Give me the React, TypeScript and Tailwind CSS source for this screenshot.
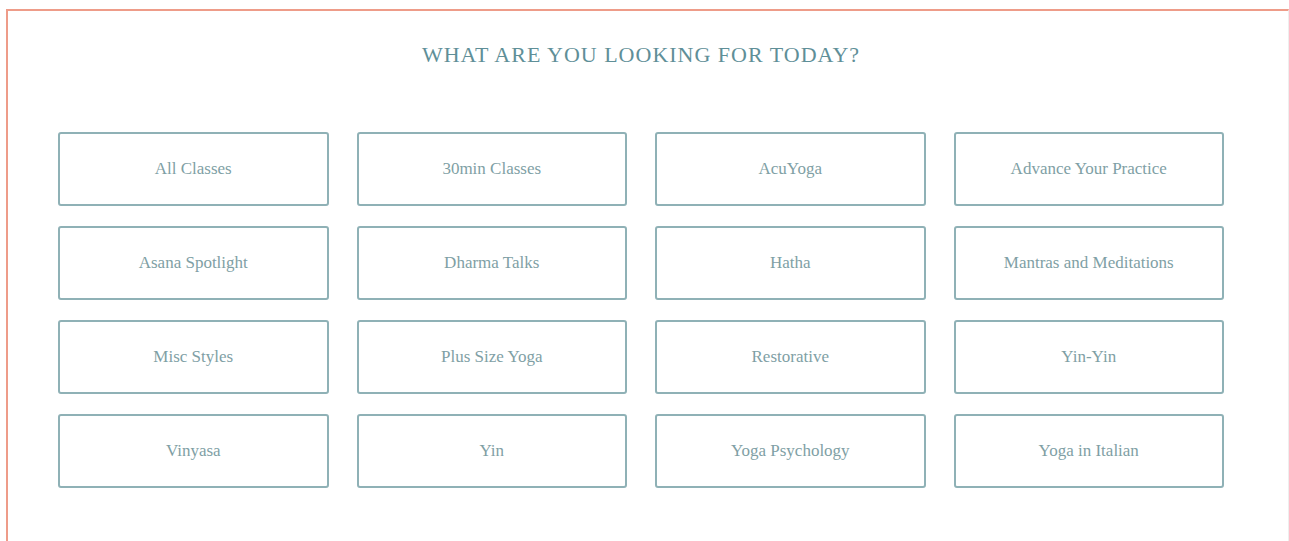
const categories = [
  "All Classes",
  "30min Classes",
  "AcuYoga",
  "Advance Your Practice",
  "Asana Spotlight",
  "Dharma Talks",
  "Hatha",
  "Mantras and Meditations",
  "Misc Styles",
  "Plus Size Yoga",
  "Restorative",
  "Yin-Yin",
  "Vinyasa",
  "Yin",
  "Yoga Psychology",
  "Yoga in Italian",
];

const CategoryButton = ({ label }: { label: string }) => (
  <button className="flex h-[74px] items-center justify-center rounded-[3px] border-2 border-[#8fb1b6] bg-white text-[17px] text-[#7f9fa5]">
    {label}
  </button>
);

export default function App() {
  return (
    <div className="min-h-[541px] bg-white pl-[6px] pt-[9px] font-['Liberation_Serif',serif]">
      <div className="h-[532px] border-l-2 border-t-2 border-r border-l-[#ee9c89] border-t-[#ee9c89] border-r-[#eeeeee] pl-[50px] pt-[27px]">
        <h2 className="w-[1166px] text-center text-[22px] leading-[34px] tracking-[1px] text-[#5f8f98]">
          WHAT ARE YOU LOOKING FOR TODAY?
        </h2>
        <div className="mt-[60px] grid w-[1166px] grid-cols-4 gap-x-[28px] gap-y-[20px]">
          {categories.map((c) => (
            <CategoryButton key={c} label={c} />
          ))}
        </div>
      </div>
    </div>
  );
}
